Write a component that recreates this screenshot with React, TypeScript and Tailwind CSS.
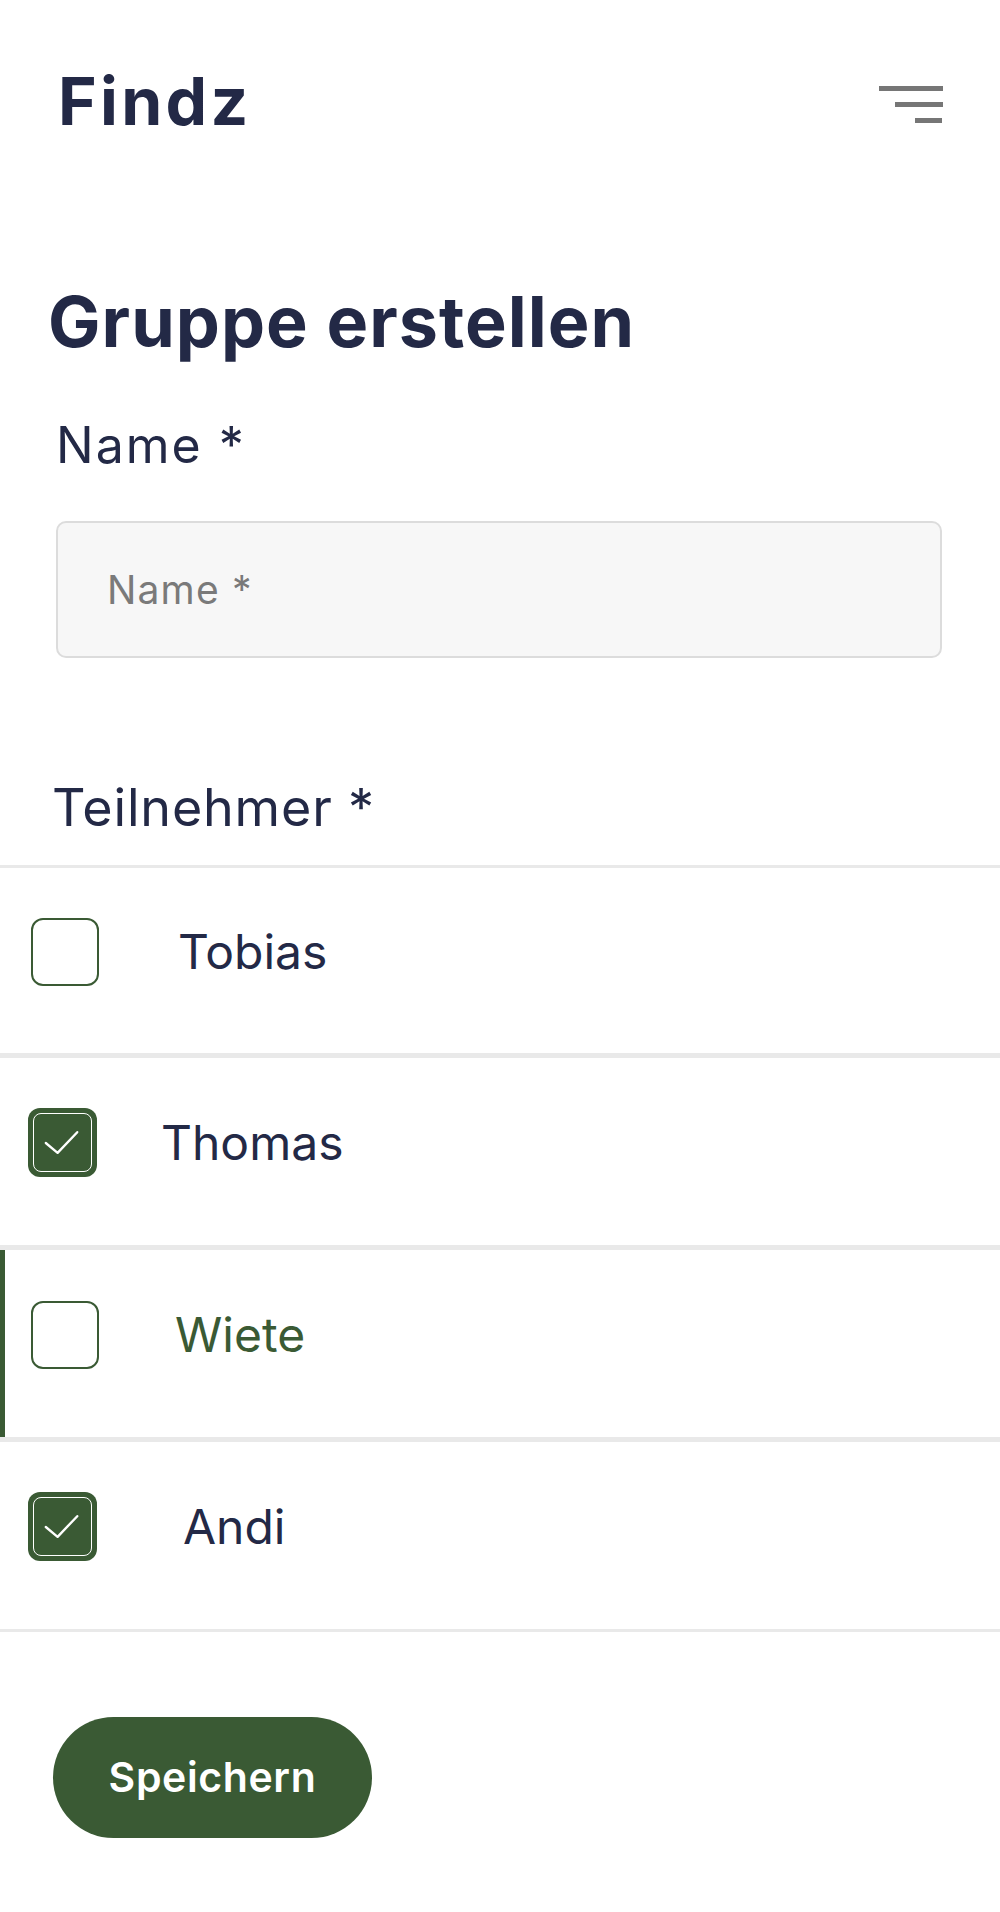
import React, { useState } from 'react';

const navy = 'text-[#232946]';

function Box({ checked }: { checked: boolean }) {
  if (!checked) {
    return <div className="w-[68px] h-[68px] rounded-[12px] border-2 border-[#3a5a34] bg-white shrink-0" />;
  }
  return (
    <div className="w-[69px] h-[69px] rounded-[12px] bg-[#3a5a34] p-[5px] shrink-0">
      <div className="w-full h-full rounded-[8px] border border-white flex items-center justify-center">
        <svg width="58" height="58" viewBox="0 0 58 58" fill="none">
          <polyline points="12,29 24,39 44,18" stroke="white" strokeWidth="2.4" strokeLinecap="round" strokeLinejoin="round" />
        </svg>
      </div>
    </div>
  );
}

const people = [
  { name: 'Tobias', checked: false, active: false, pl: 'pl-[26px]', gap: 'ml-[79px]', h: 'h-[185px]' },
  { name: 'Thomas', checked: true, active: false, pl: 'pl-[23px]', gap: 'ml-[64px]', h: 'h-[187px]' },
  { name: 'Wiete', checked: false, active: true, pl: 'pl-[26px]', gap: 'ml-[76px]', h: 'h-[187px]' },
  { name: 'Andi', checked: true, active: false, pl: 'pl-[23px]', gap: 'ml-[86px]', h: 'h-[187px]' },
];

export default function App() {
  const [name, setName] = useState('');

  return (
    <div className="w-[1000px] min-h-[1912px] bg-white" style={{ fontFamily: 'Inter, "Noto Sans", sans-serif' }}>
      {/* header */}
      <div className="flex justify-between items-start pl-[58px] pr-[57px]">
        <div className={`mt-[68px] text-[66px] leading-none font-bold tracking-[0.05em] ${navy}`}>Findz</div>
        <svg className="mt-[86px]" width="64" height="38" viewBox="0 0 64 38">
          <rect x="0" y="0" width="64" height="5" fill="#767676" />
          <rect x="16" y="16" width="48" height="5" fill="#767676" />
          <rect x="36" y="32" width="27" height="5" fill="#767676" />
        </svg>
      </div>

      <h1 className={`mt-[153px] pl-[48px] text-[70px] leading-none font-bold tracking-[0.015em] ${navy}`}>
        Gruppe erstellen
      </h1>

      <div className="px-[56px]">
        <label className={`block mt-[63px] text-[50px] leading-none tracking-[0.04em] ${navy}`}>Name *</label>
        <input
          value={name}
          onChange={(e) => setName(e.target.value)}
          placeholder="Name *"
          className="mt-[51px] block w-[886px] h-[137px] rounded-[10px] border-2 border-[#dcdcdc] bg-[#f7f7f7] pl-[49px] text-[39px] tracking-[0.03em] text-[#232946] placeholder:text-[#7a7a7a] outline-none"
        />
      </div>

      <div className={`mt-[124px] pl-[52px] text-[52px] leading-none tracking-[0.016em] ${navy}`}>Teilnehmer *</div>

      <div className="mt-[31px] border-t-[3px] border-[#e9e9e9]">
        {people.map((p, i) => (
          <div
            key={p.name}
            className={`flex ${i === people.length - 1 ? 'border-b-[3px]' : 'border-b-[5px]'} border-[#e9e9e9]`}
          >
            <div className={`w-[5px] shrink-0 ${p.active ? 'bg-[#3a5a34]' : 'bg-white'}`} />
            <div className={`flex items-center pb-[18px] ${p.h} ${p.pl}`}>
              <Box checked={p.checked} />
              <span className={`${p.gap} text-[48px] leading-none ${p.active ? 'text-[#3a5a34]' : 'text-[#232946]'}`}>
                {p.name}
              </span>
            </div>
          </div>
        ))}
      </div>

      <div className="pl-[53px] mt-[85px]">
        <button className="w-[319px] h-[121px] rounded-full bg-[#3a5a34] text-white text-[41px] font-semibold tracking-[0.015em]">
          Speichern
        </button>
      </div>
    </div>
  );
}
